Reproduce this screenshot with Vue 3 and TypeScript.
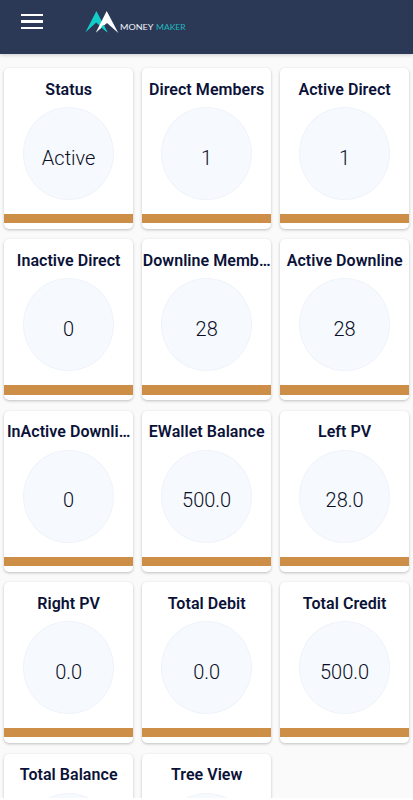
<script setup lang="ts">
interface Stat {
  title: string
  value: string
}

const stats: Stat[] = [
  { title: 'Status', value: 'Active' },
  { title: 'Direct Members', value: '1' },
  { title: 'Active Direct', value: '1' },
  { title: 'Inactive Direct', value: '0' },
  { title: 'Downline Memb…', value: '28' },
  { title: 'Active Downline', value: '28' },
  { title: 'InActive Downli…', value: '0' },
  { title: 'EWallet Balance', value: '500.0' },
  { title: 'Left PV', value: '28.0' },
  { title: 'Right PV', value: '0.0' },
  { title: 'Total Debit', value: '0.0' },
  { title: 'Total Credit', value: '500.0' },
  { title: 'Total Balance', value: '' },
  { title: 'Tree View', value: '' },
]
</script>

<template>
  <div class="screen">
    <header class="bar">
      <button class="menu" aria-label="Menu">
        <span></span><span></span><span></span>
      </button>
      <div class="brand">
        <svg class="mark" viewBox="0 0 34 24" width="34" height="24">
          <path fill="#12cdc8" d="M.3 22.6 11.4 1 22.6 22.6 11.2 12.4Z" />
          <path fill="#fff" d="M10.7 22.8 21.7 1 33.3 23 22 13Z" />
          <path fill="#12cdc8" d="M18.4 14.8 22.6 22.6 16 17.2Z" />
        </svg>
        <svg class="wordmark" viewBox="0 0 67 12" width="67" height="12">
          <text x="0" y="9" textLength="33.5" lengthAdjust="spacingAndGlyphs" fill="#f2f5fb">MONEY</text>
          <text x="36" y="9" textLength="29.5" lengthAdjust="spacingAndGlyphs" fill="#22b9bf">MAKER</text>
        </svg>
      </div>
    </header>
    <main class="grid">
      <article v-for="stat in stats" :key="stat.title" class="card">
        <h2>{{ stat.title }}</h2>
        <div class="disc"><span>{{ stat.value }}</span></div>
        <div class="stripe"></div>
      </article>
    </main>
  </div>
</template>

<style>
body {
  background: #fff;
}
</style>

<style scoped>
.screen {
  height: 797.5px;
  overflow: hidden;
  background: #fafafa;
  font-family: Roboto, "Liberation Sans", sans-serif;
}
.bar {
  box-sizing: border-box;
  height: 53.5px;
  display: flex;
  align-items: flex-start;
  padding-left: 21px;
  background: #2b3856;
  box-shadow: 0 1px 4px rgba(0, 0, 0, 0.18);
}
.menu {
  width: 22px;
  display: flex;
  flex-direction: column;
  gap: 4px;
  margin: 14px 0 0;
  padding: 0;
  border: 0;
  background: none;
}
.menu span {
  height: 2px;
  background: #fff;
}
.menu span:nth-child(2) {
  height: 3px;
}
.brand {
  display: flex;
  align-items: flex-start;
  margin: 9.5px 0 0 42px;
}
.wordmark {
  margin: 11px 0 0 1px;
  font-family: Lato, sans-serif;
  font-size: 8.2px;
}
.grid {
  display: grid;
  grid-template-columns: repeat(3, 129.3px);
  grid-auto-rows: 161px;
  gap: 10.4px 8.7px;
  padding: 14.5px 4px 0;
}
.card {
  display: flex;
  flex-direction: column;
  align-items: center;
  min-width: 0;
  overflow: hidden;
  border-radius: 5px;
  background: #fff;
  box-shadow: 0 1px 3px rgba(0, 0, 0, 0.24);
}
h2 {
  width: 100%;
  margin: 11.5px 0 7.5px;
  color: #0b1238;
  font-size: 16px;
  font-weight: 600;
  letter-spacing: 0.05px;
  line-height: 20px;
  text-align: center;
  white-space: nowrap;
}
.disc {
  box-sizing: border-box;
  flex: none;
  display: flex;
  align-items: center;
  justify-content: center;
  width: 90.5px;
  height: 93px;
  padding-top: 8px;
  border: 1px solid #eff3fa;
  border-radius: 50%;
  background: #f6faff;
  color: #0b0f24;
  font-size: 20px;
  font-weight: 350;
}
.stripe {
  flex: none;
  width: 100%;
  height: 9.2px;
  margin-top: 14px;
  background: #cd8e47;
}
</style>
